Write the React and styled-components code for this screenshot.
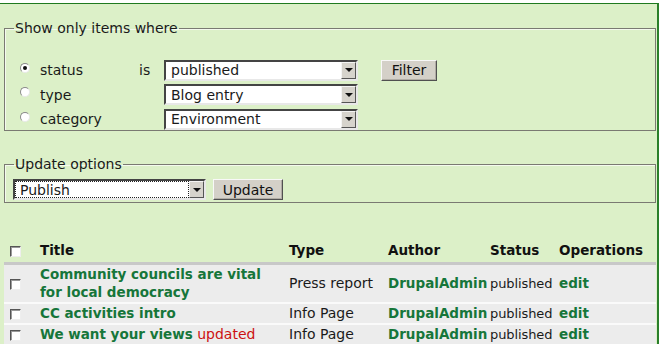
import styled, { createGlobalStyle } from "styled-components"

const GlobalStyle = createGlobalStyle`
  body {
    margin: 0;
    background: #ffffff;
    font-family: "DejaVu Sans", Verdana, sans-serif;
    font-size: 14px;
    color: #1a1a1a;
  }
`

const Page = styled.div`
  width: 659px;
  height: 341px;
  margin-top: 3px;
  border-top: 1px solid #1f7a1f;
  border-right: 2px solid #2a7f2a;
  background: #dcf0c8;
  padding: 16px 0 0 4px;
  box-sizing: border-box;
  overflow: hidden;
`

const Fieldset = styled.fieldset`
  margin: ${p => p.$gap || 0}px 0 0 0;
  width: 652px;
  box-sizing: border-box;
  border: 1px solid #7a7a72;
  box-shadow: 1px 1px 0 #f4faee inset;
  padding: ${p => p.$padTop}px 0 0 0;
  height: ${p => p.$height}px;
`

const Legend = styled.legend`
  padding: 0 1px;
  margin-left: 9px;
  font-size: 14px;
  color: #1a1a1a;
`

const FilterGrid = styled.div`
  display: grid;
  grid-template-columns: 119px 25px 217px auto;
  grid-auto-rows: 24.5px;
  align-items: center;
  padding-left: 15px;
`

const RadioLabel = styled.label`
  display: flex;
  align-items: center;
  gap: 10px;
`

const Radio = styled.span`
  display: inline-block;
  width: 10px;
  height: 10px;
  border-radius: 50%;
  background: #fff;
  border: 1px solid #8a8a8a;
  border-right-color: #e8e8e8;
  border-bottom-color: #e8e8e8;
  box-sizing: border-box;
  position: relative;
  margin-top: -5px;
  &::after {
    content: "";
    display: ${p => (p.$checked ? "block" : "none")};
    position: absolute;
    left: 2px;
    top: 2px;
    width: 4px;
    height: 4px;
    border-radius: 50%;
    background: #111;
  }
`

const Select = styled.div`
  display: flex;
  align-items: stretch;
  width: ${p => p.$width}px;
  height: 21px;
  box-sizing: border-box;
  background: #fff;
  border: 2px solid;
  border-color: #444 #e8e8e8 #e8e8e8 #444;
`

const SelectValue = styled.span`
  flex: 1;
  display: flex;
  align-items: center;
  padding-left: 4px;
  margin: 1px;
  outline: ${p => (p.$focus ? "1px dotted #222" : "none")};
`

const Arrow = styled.span`
  width: 15px;
  background: #d6d3cc;
  border: 1px solid;
  border-color: #f4f4f4 #555 #555 #f4f4f4;
  box-sizing: border-box;
  display: flex;
  align-items: center;
  justify-content: center;
  &::before {
    content: "";
    border-left: 4px solid transparent;
    border-right: 4px solid transparent;
    border-top: 4px solid #111;
  }
`

const Button = styled.button`
  font-family: "DejaVu Sans", Verdana, sans-serif;
  font-size: 14px;
  height: 21px;
  width: ${p => p.$width}px;
  padding: 0;
  background: #d4d0c8;
  color: #111;
  border: 1px solid;
  border-color: #f8f8f8 #505050 #505050 #f8f8f8;
  box-shadow: -1px -1px 0 #b0aca4 inset;
`

const UpdateRow = styled.div`
  display: flex;
  align-items: center;
  gap: 7px;
  padding-left: 8px;
`

const Table = styled.table`
  margin-top: 35px;
  width: 652px;
  border-collapse: collapse;
  table-layout: fixed;
  font-size: 14px;
  & th {
    text-align: left;
    font-weight: bold;
    font-size: 13.5px;
    color: #111;
    height: 24px;
    padding: 0;
    border-bottom: 3px solid #c8c8c8;
    vertical-align: middle;
  }
  & td {
    background: #ececec;
    border-bottom: 2px solid #fafafa;
    padding: 0;
    vertical-align: middle;
    white-space: nowrap;
  }
`

const CheckCell = styled.td`
  padding-left: 6px !important;
`

const CheckHead = styled.th`
  width: 30px;
  padding-left: 6px !important;
`

const Checkbox = styled.span`
  display: inline-block;
  width: 11px;
  height: 11px;
  box-sizing: border-box;
  background: #fff;
  border: 1px solid;
  border-color: #555 #eee #eee #555;
  box-shadow: 1px 1px 0 #9a9a9a inset;
  vertical-align: middle;
`

const Row = styled.tr`
  height: ${p => (p.$tall ? 39 : 21)}px;
`

const TitleLink = styled.a`
  color: #16763a;
  font-weight: bold;
  font-size: 13.5px;
  text-decoration: none;
  line-height: 18px;
`

const Updated = styled.span`
  color: #cc1111;
  font-weight: normal;
`

const StatusCell = styled.td`
  font-size: 13px;
  letter-spacing: -0.1px;
`

const rows = [
  { title: ["Community councils are vital", "for local democracy"], type: "Press report", tall: true },
  { title: ["CC activities intro"], type: "Info Page" },
  { title: ["We want your views"], type: "Info Page", updated: true },
]

export default function App() {
  return (
    <>
      <GlobalStyle />
      <Page>
        <Fieldset $padTop={22} $height={111}>
          <Legend>Show only items where</Legend>
          <FilterGrid>
            <RadioLabel><Radio $checked />status</RadioLabel>
            <span>is</span>
            <Select $width={194}><SelectValue>published</SelectValue><Arrow /></Select>
            <Button $width={56}>Filter</Button>
            <RadioLabel><Radio />type</RadioLabel>
            <span />
            <Select $width={194}><SelectValue>Blog entry</SelectValue><Arrow /></Select>
            <span />
            <RadioLabel><Radio />category</RadioLabel>
            <span />
            <Select $width={194}><SelectValue>Environment</SelectValue><Arrow /></Select>
          </FilterGrid>
        </Fieldset>
        <Fieldset $padTop={7} $height={47} $gap={25}>
          <Legend>Update options</Legend>
          <UpdateRow>
            <Select $width={193}><SelectValue $focus>Publish</SelectValue><Arrow /></Select>
            <Button $width={70}>Update</Button>
          </UpdateRow>
        </Fieldset>
        <Table>
          <colgroup>
            <col style={{ width: 36 }} />
            <col style={{ width: 249 }} />
            <col style={{ width: 99 }} />
            <col style={{ width: 102 }} />
            <col style={{ width: 69 }} />
            <col />
          </colgroup>
          <thead>
            <tr>
              <CheckHead><Checkbox /></CheckHead>
              <th>Title</th>
              <th>Type</th>
              <th>Author</th>
              <th>Status</th>
              <th>Operations</th>
            </tr>
          </thead>
          <tbody>
            {rows.map((r, i) => (
              <Row key={i} $tall={r.tall}>
                <CheckCell><Checkbox /></CheckCell>
                <td>
                  <TitleLink href="#">
                    {r.title.map((line, j) => (
                      <span key={j}>{j > 0 && <br />}{line}</span>
                    ))}
                  </TitleLink>
                  {r.updated && <Updated> updated</Updated>}
                </td>
                <td>{r.type}</td>
                <td><TitleLink href="#">DrupalAdmin</TitleLink></td>
                <StatusCell>published</StatusCell>
                <td><TitleLink href="#">edit</TitleLink></td>
              </Row>
            ))}
          </tbody>
        </Table>
      </Page>
    </>
  )
}
